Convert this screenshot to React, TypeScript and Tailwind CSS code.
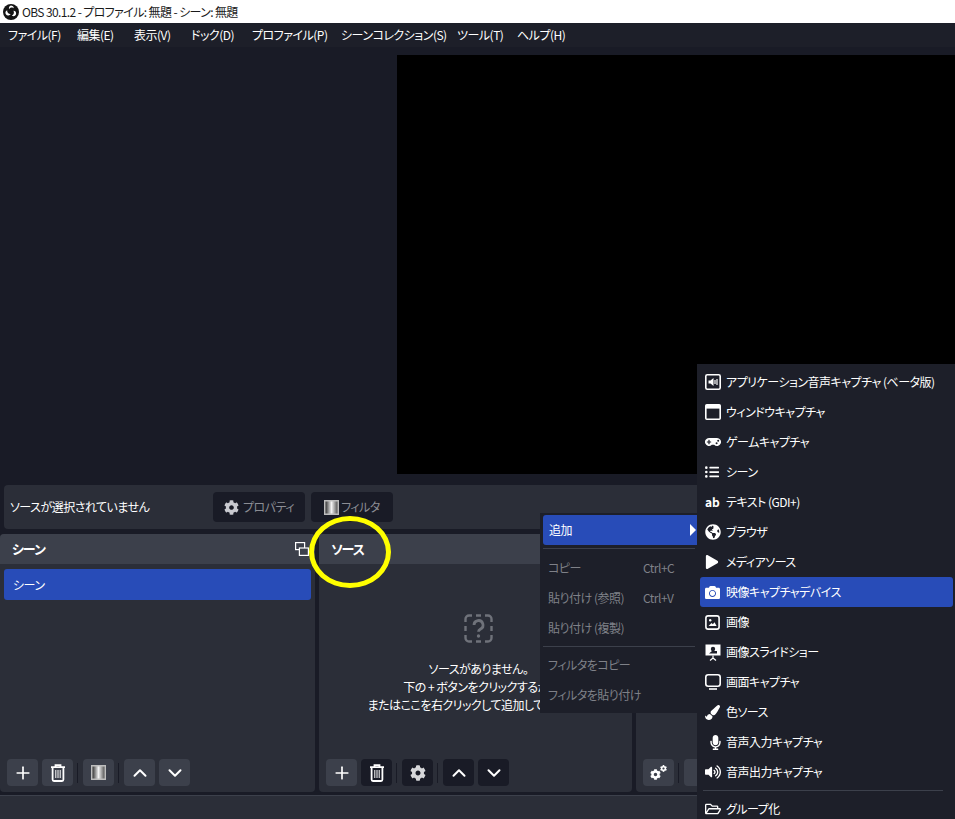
import React, { FC, ReactNode } from "react";
import { Plus, ChevronUp, ChevronDown } from "lucide-react";
import { FaCog, FaGamepad, FaListUl, FaPlay, FaCamera, FaPaintBrush, FaMicrophone, FaVolumeUp, FaRegFolderOpen, FaGlobeAmericas } from "react-icons/fa";

const font = { fontFamily: '"Noto Sans CJK JP", "Noto Sans", sans-serif' };

const menus = [
  { label: "ファイル(F)", width: "w-[69px]" },
  { label: "編集(E)", width: "w-[57px]" },
  { label: "表示(V)", width: "w-[57px]" },
  { label: "ドック(D)", width: "w-[61px]" },
  { label: "プロファイル(P)", width: "w-[89px]" },
  { label: "シーンコレクション(S)", width: "w-[116px]" },
  { label: "ツール(T)", width: "w-[60px]" },
  { label: "ヘルプ(H)", width: "w-[50px]" },
];

const ObsLogo = () => (
  <svg width="16" height="16" viewBox="0 0 16 16">
    <circle cx="8" cy="8" r="8" fill="#151515" />
    <path d="M8 1.6a3 3 0 0 1 3 2.6 3.2 3.2 0 0 0-4.9 1.1A3 3 0 0 1 8 1.6Z" fill="#fff" />
    <path d="M3 10.5a3 3 0 0 1 1.2-4.2A3.2 3.2 0 0 0 7.7 10 3 3 0 0 1 3 10.5Z" fill="#fff" />
    <path d="M13 10.4a3 3 0 0 1-4.2 1.2 3.2 3.2 0 0 0 1.6-4.8 3 3 0 0 1 2.6 3.6Z" fill="#fff" />
  </svg>
);

const FilterIcon: FC<{ id: string }> = ({ id }) => (
  <svg width="15" height="15" viewBox="0 0 15 15">
    <defs>
      <linearGradient id={id}>
        <stop offset="0" stopColor="#1c1c1c" />
        <stop offset="0.5" stopColor="#f2f2f2" />
        <stop offset="1" stopColor="#444" />
      </linearGradient>
    </defs>
    <rect x="0.75" y="0.75" width="13.5" height="13.5" fill={`url(#${id})`} stroke="#bdbdbd" strokeWidth="1.5" />
  </svg>
);

const TrashIcon = () => (
  <svg width="16" height="18" viewBox="0 0 16 18" fill="none" stroke="#fff" strokeWidth="1.8">
    <path d="M1 3.2h14M5.5 3V1.2h5V3" />
    <path d="M2.6 3.4v12.2a1.4 1.4 0 0 0 1.4 1.4h8a1.4 1.4 0 0 0 1.4-1.4V3.4" />
    <path d="M5.8 6v8M8 6v8M10.2 6v8" strokeWidth="1" />
  </svg>
);

const GearsIcon = () => (
  <svg width="17" height="15" viewBox="0 0 17 15">
    <FaCog x="0" y="4" size={11} fill="#fff" />
    <FaCog x="10" y="0" size={7} fill="#fff" />
  </svg>
);

const HelpIcon = () => (
  <svg width="29" height="29" viewBox="0 0 29 29" fill="none" stroke="#6f727a" strokeWidth="2.4">
    <path d="M1.5 8V5a3.5 3.5 0 0 1 3.5-3.5h3M12 1.5h5M21 1.5h3A3.5 3.5 0 0 1 27.5 5v3M27.5 12v5M27.5 21v3a3.5 3.5 0 0 1-3.5 3.5h-3M17 27.5h-5M8 27.5H5A3.5 3.5 0 0 1 1.5 24v-3M1.5 17v-5" />
    <path d="M10 11a4.5 4.5 0 1 1 6.6 4c-1.4.8-2.1 1.4-2.1 2.8" strokeWidth="2.8" />
    <circle cx="14.5" cy="22" r="1.7" fill="#6f727a" stroke="none" />
  </svg>
);

const ToolButton: FC<{ dark?: boolean; children?: ReactNode }> = ({ dark, children }) => (
  <div className={`flex h-[27px] w-[31px] items-center justify-center rounded-[4px] ${dark ? "bg-[#191b26]" : "bg-[#3c404b]"}`}>{children}</div>
);

const Sep = () => (
  <div className="flex h-[27px] w-[2px] items-center">
    <div className="h-[20px] w-px bg-[#191b26]" />
  </div>
);

const Dock: FC<{ title: string; width: string; children: ReactNode; side?: ReactNode; toolbar: ReactNode }> = ({ title, width, children, side, toolbar }) => (
  <section className={`flex h-[258px] flex-col overflow-hidden rounded-[4px] bg-[#2b2e38] ${width}`}>
    <header className="flex h-[30px] shrink-0 items-center justify-between bg-[#3c404b] pl-[12px] pr-[6px] text-[13px] font-semibold tracking-[-1px] text-white">
      <span>{title}</span>
      {side}
    </header>
    <div className="min-h-0 flex-1">{children}</div>
    <div className="flex h-[33px] shrink-0 items-start gap-[4px] pl-[7px]">{toolbar}</div>
  </section>
);

const AppAudioIcon = () => (
  <svg width="16" height="16" viewBox="0 0 16 16" fill="none">
    <rect x="0.8" y="0.8" width="14.4" height="14.4" rx="1.5" stroke="#fff" strokeWidth="1.6" />
    <path d="M3.5 6.5h2L8.5 4v8l-3-2.5h-2Z" fill="#fff" />
    <path d="M10 6v4M12 5v6" stroke="#fff" strokeWidth="1.2" />
  </svg>
);
const WindowIcon = () => (
  <svg width="16" height="16" viewBox="0 0 16 16" fill="none">
    <rect x="0.8" y="0.8" width="14.4" height="14.4" rx="1" stroke="#fff" strokeWidth="1.6" />
    <rect x="1" y="1" width="14" height="3.6" fill="#fff" />
  </svg>
);
const PictureIcon = () => (
  <svg width="15" height="15" viewBox="0 0 15 15" fill="none">
    <rect x="0.9" y="0.9" width="13.2" height="13.2" rx="2.2" stroke="#fff" strokeWidth="1.6" />
    <circle cx="5.2" cy="5.2" r="1.2" fill="#fff" />
    <path d="M3.6 11 6.5 8l1.4 1.3 1.6-2.1L11.6 11Z" fill="#fff" />
  </svg>
);
const SlideshowIcon = () => (
  <svg width="16" height="17" viewBox="0 0 16 17">
    <path d="M0.5 0.5h15v11h-15Z" fill="#fff" />
    <circle cx="8" cy="5" r="2.2" fill="#1d1f29" />
    <path d="M4 9.5 7 7h5v2.5Z" fill="#1d1f29" />
    <path d="M8 11.5v2.5M8 14l-3 2.5M8 14l3 2.5" stroke="#fff" strokeWidth="1.2" />
  </svg>
);
const DisplayIcon = () => (
  <svg width="16" height="16" viewBox="0 0 16 16" fill="none" stroke="#fff" strokeWidth="1.6">
    <rect x="0.8" y="0.8" width="14.4" height="11.4" rx="2.4" />
    <path d="M4 15h8" />
  </svg>
);

const subItems: { label: string; icon: ReactNode; active?: boolean }[] = [
  { label: "アプリケーション音声キャプチャ (ベータ版)", icon: <AppAudioIcon /> },
  { label: "ウィンドウキャプチャ", icon: <WindowIcon /> },
  { label: "ゲームキャプチャ", icon: <FaGamepad size={16} /> },
  { label: "シーン", icon: <FaListUl size={14} /> },
  { label: "テキスト (GDI+)", icon: <span className="text-[12px] font-bold leading-none tracking-normal text-white">ab</span> },
  { label: "ブラウザ", icon: <FaGlobeAmericas size={16} /> },
  { label: "メディアソース", icon: <FaPlay size={14} /> },
  { label: "映像キャプチャデバイス", icon: <FaCamera size={15} />, active: true },
  { label: "画像", icon: <PictureIcon /> },
  { label: "画像スライドショー", icon: <SlideshowIcon /> },
  { label: "画面キャプチャ", icon: <DisplayIcon /> },
  { label: "色ソース", icon: <FaPaintBrush size={15} /> },
  { label: "音声入力キャプチャ", icon: <span className="pl-[3px]"><FaMicrophone size={15} /></span> },
  { label: "音声出力キャプチャ", icon: <FaVolumeUp size={16} /> },
];

const contextItems = [
  { label: "コピー", keys: "Ctrl+C" },
  { label: "貼り付け (参照)", keys: "Ctrl+V" },
  { label: "貼り付け (複製)", keys: "" },
];

export default function App() {
  return (
    <div className='relative flex h-[819px] w-full flex-col overflow-hidden bg-[#191b26] text-[12px] tracking-[-0.5px] text-white [font-feature-settings:"palt"]' style={font}>
      <div className="flex h-[23px] shrink-0 items-center gap-[3px] bg-white pl-[3px] tracking-[-0.62px] text-[#1a1a1a]">
        <ObsLogo />
        <span>OBS 30.1.2 - プロファイル: 無題 - シーン: 無題</span>
      </div>

      <nav className="flex h-[24px] shrink-0 items-center bg-[#1d1f29] pl-[8px]">
        {menus.map((m) => (
          <span key={m.label} className={`${m.width} whitespace-nowrap`}>{m.label}</span>
        ))}
      </nav>

      <div className="flex h-[438px] shrink-0 justify-end bg-[#191b26] pt-[8px]">
        <div className="h-[419px] w-[558px] bg-black" />
      </div>

      <div className="mx-[4px] flex h-[44px] shrink-0 items-center rounded-[4px] bg-[#2b2e38] pl-[6px]">
        <span className="w-[203px]">ソースが選択されていません</span>
        <div className="flex h-[30px] w-[92px] items-center justify-center gap-[4px] rounded-[4px] bg-[#191b26] text-[#8b8d94]">
          <FaCog size={15} className="text-[#c9cad0]" />
          プロパティ
        </div>
        <div className="ml-[6px] flex h-[30px] w-[82px] items-center justify-center gap-[2px] rounded-[4px] bg-[#191b26] text-[#8b8d94]">
          <FilterIcon id="filter-ctx" />
          フィルタ
        </div>
      </div>

      <div className="mt-[5px] flex shrink-0 gap-[4px]">
        <Dock
          title="シーン"
          width="w-[315px]"
          side={
            <svg width="14" height="14" viewBox="0 0 14 14" fill="none" stroke="#fff" strokeWidth="1.2">
              <rect x="0.6" y="0.6" width="9" height="7" fill="#3c404b" />
              <rect x="4.4" y="6" width="9" height="7.4" fill="#3c404b" />
            </svg>
          }
          toolbar={
            <>
              <ToolButton><Plus className="h-[20px] w-[20px]" strokeWidth={2} /></ToolButton>
              <ToolButton><TrashIcon /></ToolButton>
              <Sep />
              <ToolButton><FilterIcon id="filter-scene" /></ToolButton>
              <Sep />
              <ToolButton><ChevronUp className="h-[22px] w-[22px]" strokeWidth={2.2} /></ToolButton>
              <ToolButton><ChevronDown className="h-[22px] w-[22px]" strokeWidth={2.2} /></ToolButton>
            </>
          }
        >
          <div className="ml-[4px] mt-[5px] flex h-[31px] w-[307px] items-center rounded-[3px] bg-[#284cb8] pl-[9px]">シーン</div>
        </Dock>

        <Dock
          title="ソース"
          width="w-[313px]"
          toolbar={
            <>
              <ToolButton><Plus className="h-[20px] w-[20px]" strokeWidth={2} /></ToolButton>
              <ToolButton dark><TrashIcon /></ToolButton>
              <Sep />
              <ToolButton dark><FaCog size={16} className="text-[#d6d7da]" /></ToolButton>
              <Sep />
              <ToolButton dark><ChevronUp className="h-[22px] w-[22px]" strokeWidth={2.2} /></ToolButton>
              <ToolButton dark><ChevronDown className="h-[22px] w-[22px]" strokeWidth={2.2} /></ToolButton>
            </>
          }
        >
          <div className="flex h-full flex-col items-center whitespace-nowrap pl-[6px] pt-[50px] text-center leading-[18px]">
            <HelpIcon />
            <p className="mt-[17px]">ソースがありません。</p>
            <p>下の + ボタンをクリックするか、</p>
            <p>またはここを右クリックして追加してください。</p>
          </div>
        </Dock>

        <Dock
          title="音声ミキサー"
          width="w-[319px]"
          toolbar={
            <>
              <ToolButton><GearsIcon /></ToolButton>
              <Sep />
              <ToolButton />
            </>
          }
        >
          <div />
        </Dock>
      </div>

      <div className="mt-[3px] min-h-0 flex-1 border-t border-[#3c404b] bg-[#2b2e38]" />

      <div className="absolute left-[309px] top-[516px] h-[72px] w-[82px] rounded-[50%] border-[5px] border-[#ffff00]" />

      <div className="absolute left-[540px] top-[513px] h-[200px] w-[157px] bg-[#1d1f29] pl-[3px] pt-[2px] text-[#7f8188]">
        <div className="flex h-[30px] items-center justify-between rounded-l-[3px] bg-[#284cb8] pl-[6px] pr-[1px] text-white">
          追加
          <span className="h-0 w-0 border-y-[6px] border-l-[6px] border-y-transparent border-l-white" />
        </div>
        <div className="my-[3px] mr-[2px] h-px bg-[#3c404b]" />
        <div className="pt-[1px]">
          {contextItems.map((c) => (
            <div key={c.label} className="flex h-[30px] items-center pl-[5px]">
              <span className="w-[95px]">{c.label}</span>
              <span>{c.keys}</span>
            </div>
          ))}
        </div>
        <div className="my-[3px] mr-[2px] h-px bg-[#3c404b]" />
        <div className="flex h-[30px] items-center pl-[5px]">フィルタをコピー</div>
        <div className="flex h-[30px] items-center pl-[5px]">フィルタを貼り付け</div>
      </div>

      <div className="absolute left-[697px] top-[364px] h-[455px] w-[258px] bg-[#1d1f29] pl-[3px] pt-[3px]">
        {subItems.map((s) => (
          <div key={s.label} className={`flex h-[30px] w-[253px] items-center rounded-[3px] pl-[5px] ${s.active ? "bg-[#284cb8]" : ""}`}>
            <span className="flex w-[21px] shrink-0 items-center justify-start">{s.icon}</span>
            <span className="whitespace-nowrap">{s.label}</span>
          </div>
        ))}
        <div className="my-[3px] ml-[3px] h-px w-[240px] bg-[#3c404b]" />
        <div className="flex h-[30px] w-[253px] items-center pl-[5px]">
          <span className="flex w-[21px] shrink-0"><FaRegFolderOpen size={16} /></span>
          <span>グループ化</span>
        </div>
      </div>
    </div>
  );
}
